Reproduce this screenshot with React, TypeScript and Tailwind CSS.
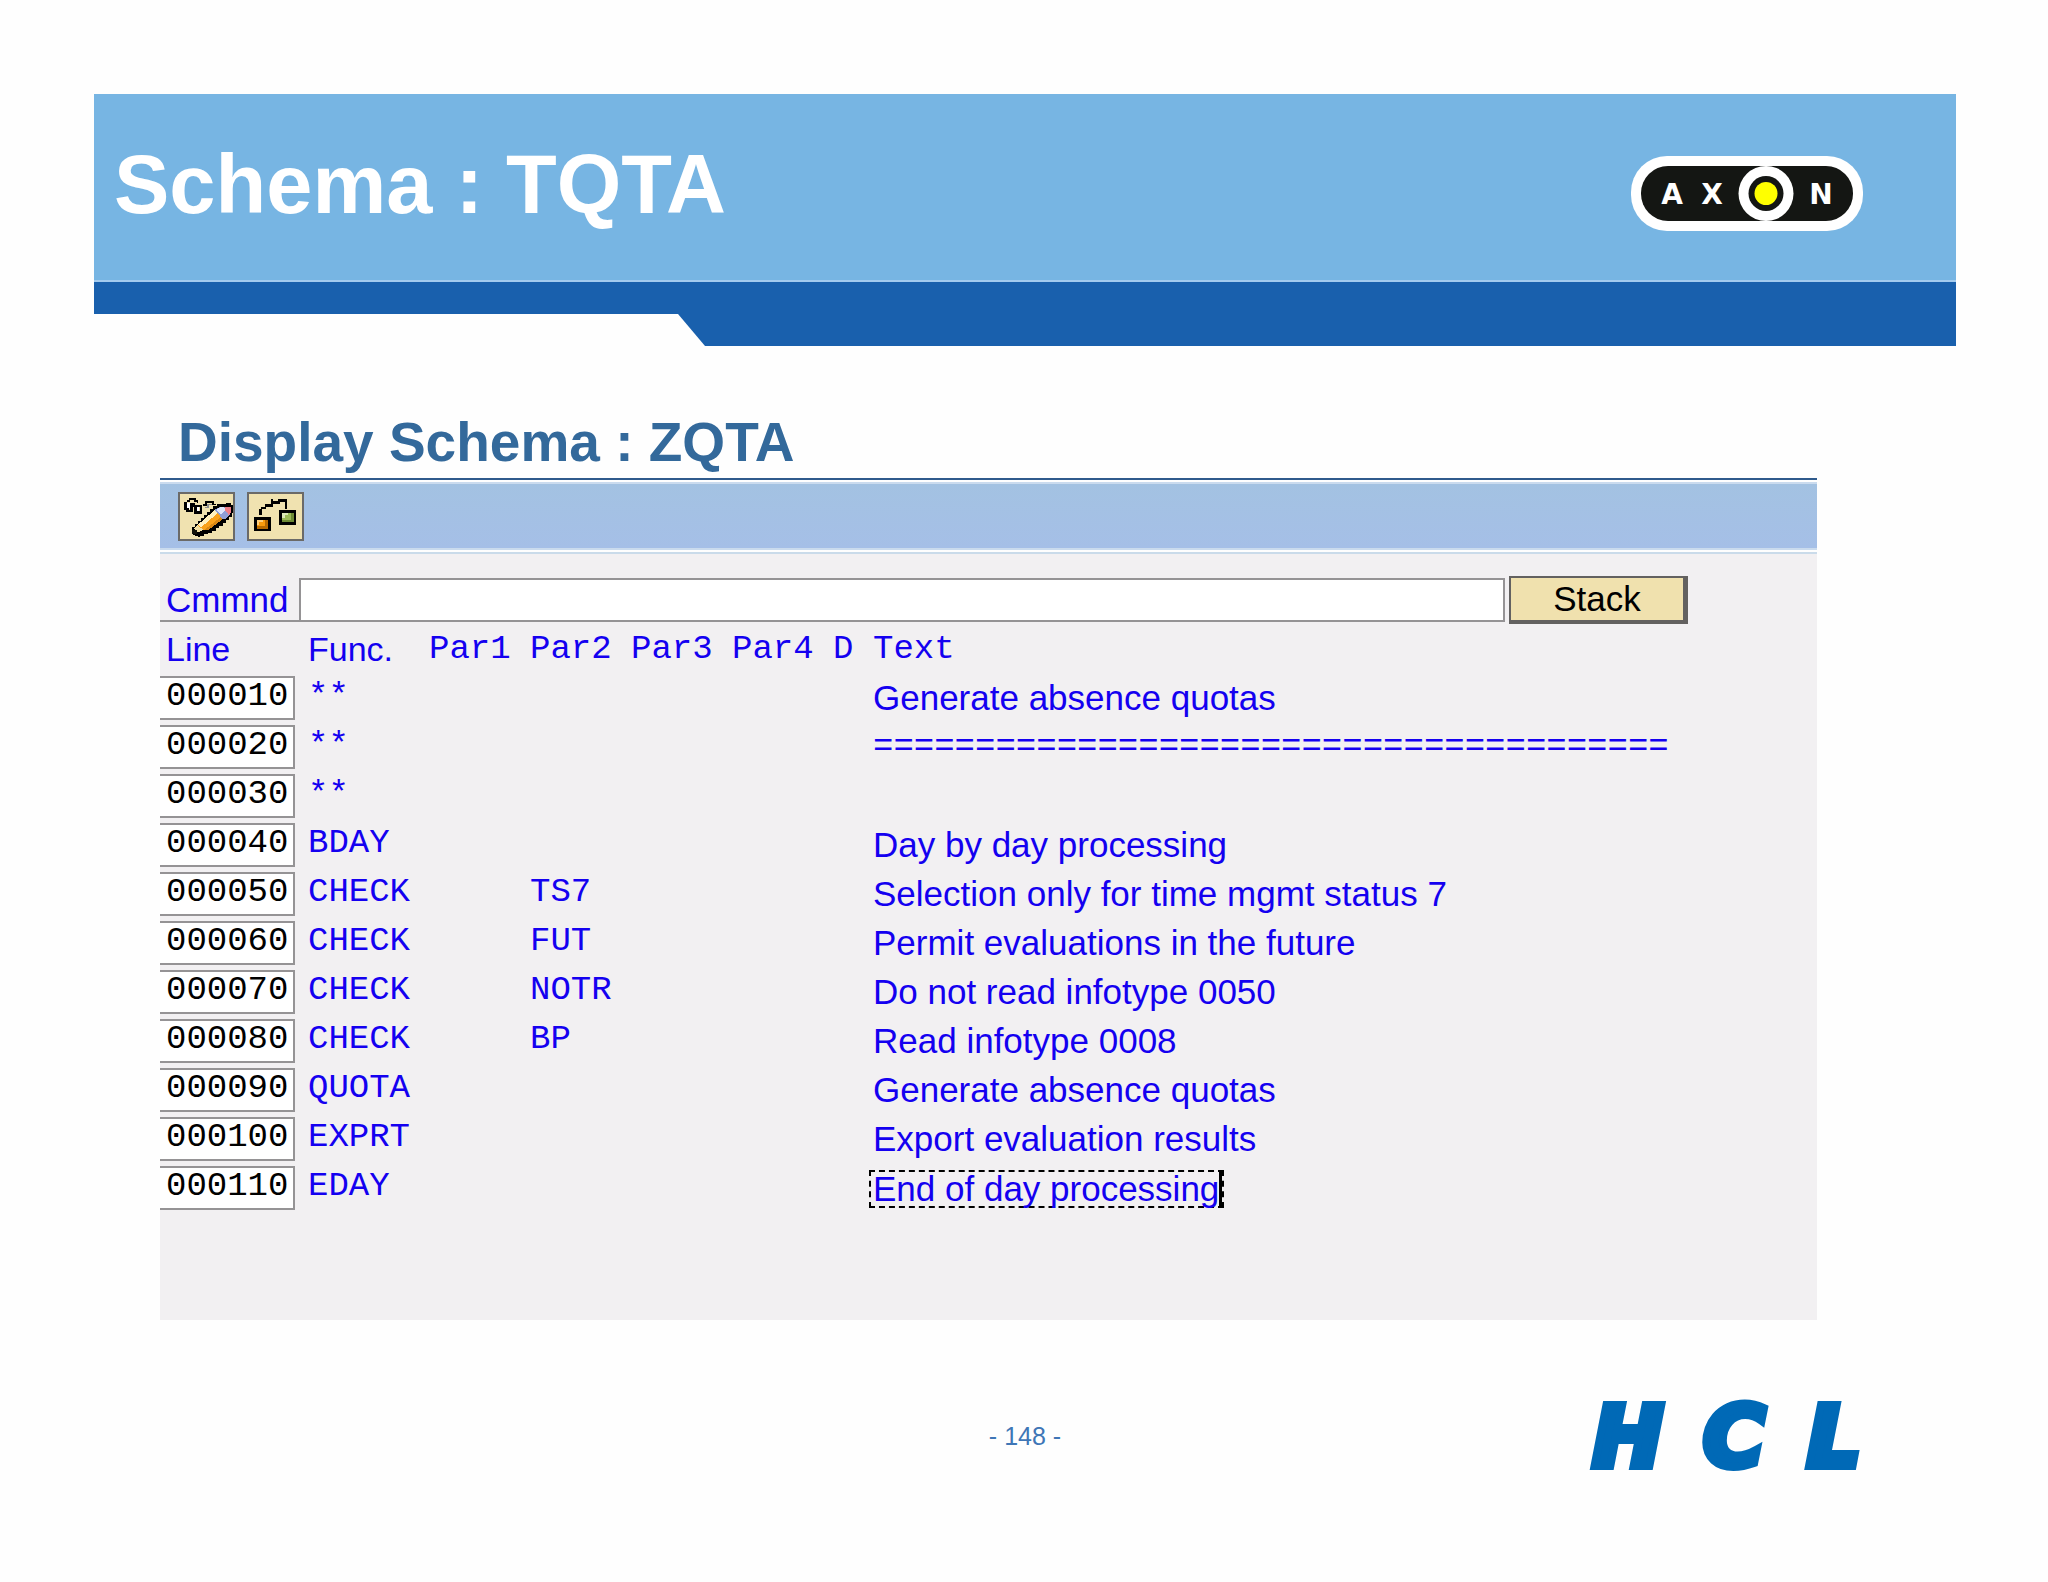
import { useState } from 'react';

interface SchemaLine {
  line: string;
  func: string;
  par2?: string;
  text?: string;
}

const SCHEMA_LINES: SchemaLine[] = [
  { line: '000010', func: '**', text: 'Generate absence quotas' },
  { line: '000020', func: '**', text: '=======================================' },
  { line: '000030', func: '**' },
  { line: '000040', func: 'BDAY', text: 'Day by day processing' },
  { line: '000050', func: 'CHECK', par2: 'TS7', text: 'Selection only for time mgmt status 7' },
  { line: '000060', func: 'CHECK', par2: 'FUT', text: 'Permit evaluations in the future' },
  { line: '000070', func: 'CHECK', par2: 'NOTR', text: 'Do not read infotype 0050' },
  { line: '000080', func: 'CHECK', par2: 'BP', text: 'Read infotype 0008' },
  { line: '000090', func: 'QUOTA', text: 'Generate absence quotas' },
  { line: '000100', func: 'EXPRT', text: 'Export evaluation results' },
  { line: '000110', func: 'EDAY', text: 'End of day processing' },
];

const FOCUSED_LINE = '000110';

function AxonLogo() {
  return (
    <svg width="232" height="75" viewBox="0 0 232 75" role="img" aria-label="Axon">
      <rect width="232" height="75" rx="36" fill="#fff" />
      <rect x="10" y="10" width="212" height="55" rx="27" fill="#141613" />
      <circle cx="135" cy="37.5" r="27.5" fill="#fff" />
      <circle cx="135" cy="37.5" r="17.5" fill="#141613" />
      <circle cx="135" cy="37.5" r="11.5" fill="#ffff00" />
      <g fill="#fff" fontSize="28" fontWeight="700" textAnchor="middle" className="font-['DejaVu_Sans',sans-serif]">
        <text x="41" y="48">A</text>
        <text x="81" y="48">X</text>
        <text x="190" y="48">N</text>
      </g>
    </svg>
  );
}

function HclLogo() {
  return (
    <svg width="370" height="56" viewBox="0 0 370 56" role="img" aria-label="HCL" className="overflow-visible">
      <g
        fill="#0069b6"
        stroke="#0069b6"
        strokeWidth="8"
        fontSize="84"
        fontWeight="700"
        fontStyle="italic"
        textAnchor="middle"
        className="font-['DejaVu_Sans',sans-serif]"
      >
        <text x="80" y="58">H</text>
        <text x="186" y="58">C</text>
        <text x="286" y="58">L</text>
      </g>
    </svg>
  );
}

// glasses + pencil
function DisplayChangeIcon() {
  return (
    <svg width="53" height="45" viewBox="6 6 159 135" shapeRendering="crispEdges" aria-hidden="true">
      <path d="M27 34h9v18h-9zM54 46h8v14h-8z" fill="#fff" />
      <path d="M26 27h8v-7h17v6h7v8" fill="none" stroke="#000" strokeWidth="5" />
      <path d="M22 30v20h6v6h12v-20h8v6h20v19h-16v-17" fill="none" stroke="#000" strokeWidth="7" />
      <path d="M76 38h8v-9h20v8h9" fill="none" stroke="#000" strokeWidth="5" />
      <path d="M82 46h8v-8h12" fill="none" stroke="#8e8e8e" strokeWidth="4" />
      <path
        d="M42 126v-20h8v-10h9v-9h9v-9h9v-9h10v-9h9v-9h10v-8h12v-6h26v-5h16v6h8v26h-7v10h-9v9h-9v9h-9v9h-10v8h-10v7h-11v7h-12v4h-14v5h-12v4z"
        fill="#000"
      />
      <path d="M58 100l52-46 25 25-42 34h-20z" fill="#f9a11b" />
      <path d="M60 98l50-44 10 9-52 44z" fill="#fff0bd" />
      <path d="M80 113l50-39 6 6-44 33z" fill="#d98713" />
      <path d="M49 109l9-9 18 13-11 6h-8z" fill="#f3dfa2" />
      <path d="M110 54l14-9h18l14 15v8l-16 14h-5z" fill="#8f9ed4" />
      <path d="M115 54l13-9h10l6 8-14 14z" fill="#dfe5fa" />
      <path d="M143 44h15v20l-6 5-11-15z" fill="#ef7e86" />
      <path d="M42 115h15v11h-15z" fill="#14140c" />
    </svg>
  );
}

// two linked nodes
function StructureIcon() {
  return (
    <svg width="53" height="45" viewBox="6 6 159 135" shapeRendering="crispEdges" aria-hidden="true">
      <path d="M40 70v-18M42 47h15M55 40h20M74 44v-22M74 31h24M94 25h26M116 22v28" fill="none" stroke="#000" strokeWidth="7" />
      <path d="M21 75h50v43h-50zM97 55h51v43h-51z" fill="#000" />
      <path d="M29 83h34v28h-34z" fill="#b96b00" />
      <path d="M29 83h26v20h-26z" fill="#f99b0c" />
      <path d="M29 83h18v7h-10v9h-8z" fill="#ffcf7a" />
      <path d="M105 63h35v28h-35z" fill="#6d8a35" />
      <path d="M105 63h27v20h-27z" fill="#9bbb57" />
      <path d="M105 63h19v7h-11v9h-8z" fill="#dbe8b6" />
    </svg>
  );
}

function ToolbarButton({ label, children }: { label: string; children: React.ReactNode }) {
  return (
    <button
      type="button"
      aria-label={label}
      className="flex h-[49px] w-[57px] items-center justify-center border-2 border-[#6b6a68] bg-[#f0e2b0]"
    >
      {children}
    </button>
  );
}

function SchemaTable() {
  return (
    <table className="w-full table-fixed border-collapse text-left font-['Liberation_Mono',monospace] text-[34px] leading-[40px] text-[#1400f0]">
      <colgroup>
        <col className="w-[148px]" />
        <col className="w-[121px]" />
        <col className="w-[101px]" />
        <col className="w-[101px]" />
        <col className="w-[101px]" />
        <col className="w-[101px]" />
        <col className="w-[40px]" />
        <col />
      </colgroup>
      <thead>
        <tr className="h-[49px] [&>th]:p-0 [&>th]:font-normal">
          <th scope="col" className="font-['Liberation_Sans',sans-serif]">
            <span className="pl-1.5">Line</span>
          </th>
          <th scope="col" className="font-['Liberation_Sans',sans-serif]">Func.</th>
          <th scope="col">Par1</th>
          <th scope="col">Par2</th>
          <th scope="col">Par3</th>
          <th scope="col">Par4</th>
          <th scope="col">D</th>
          <th scope="col">Text</th>
        </tr>
      </thead>
      <tbody>
        {SCHEMA_LINES.map((row) => (
          <tr key={row.line} className="h-[49px] whitespace-nowrap [&>td]:p-0">
            <td>
              <input
                aria-label={`Line ${row.line}`}
                defaultValue={row.line}
                className="block h-11 w-[135px] border-2 border-l-0 border-[#959395] bg-white pb-1 pl-1.5 text-black outline-none"
              />
            </td>
            <td className="pb-1!">{row.func}</td>
            <td />
            <td className="pb-1!">{row.par2}</td>
            <td />
            <td />
            <td />
            <td className={row.text?.startsWith('=') ? '' : "font-['Liberation_Sans',sans-serif] text-[35px]"}>
              {row.line === FOCUSED_LINE ? (
                <span className="-ml-1 inline-flex h-[38px] items-center border-2 border-dashed border-black pl-0.5 align-middle">
                  {row.text}
                  <span className="h-[34px] w-[3px] bg-black" />
                </span>
              ) : (
                row.text
              )}
            </td>
          </tr>
        ))}
      </tbody>
    </table>
  );
}

export default function App() {
  const [command, setCommand] = useState('');

  return (
    <div className="min-h-screen bg-[#fefefe] pt-[94px] font-['Liberation_Sans',sans-serif]">
      {/* Banner */}
      <header className="mr-[92px] ml-[94px]">
        <div className="flex h-[188px] items-start justify-between border-b-2 border-[#a3cbef] bg-[#77b5e3] pr-[93px] pl-5">
          <h1 className="pt-[45px] text-[83px] leading-[92px] font-bold text-white">Schema : TQTA</h1>
          <div className="pt-[62px]">
            <AxonLogo />
          </div>
        </div>
        <div className="h-8 bg-[#1960ad]" />
        <div className="flex h-8">
          <div className="w-[584px]" />
          <svg width="28" height="32" viewBox="0 0 28 32" aria-hidden="true">
            <path d="M0 0h28v32H27z" fill="#1960ad" />
          </svg>
          <div className="flex-1 bg-[#1960ad]" />
        </div>
      </header>

      {/* Schema window */}
      <main className="mt-[60px] mr-[231px] ml-[160px]">
        <h2 className="h-[72px] pl-[18px] text-[55px] leading-[72px] font-bold text-[#33699b]">
          Display Schema : ZQTA
        </h2>
        <div className="border-t-2 border-[#2f5a8c] pt-0.5">
          <div className="flex h-[68px] items-center gap-3 border-y-2 border-[#cadbee] bg-linear-to-b from-[#a3c2e2] to-[#a5bfe7] pl-[18px]">
            <ToolbarButton label="Display / Change">
              <DisplayChangeIcon />
            </ToolbarButton>
            <ToolbarButton label="Structure">
              <StructureIcon />
            </ToolbarButton>
          </div>
        </div>
        <div className="mt-0.5 border-t-2 border-[#cadbea] bg-[#f2f0f2] pt-[22px] pb-[108px]">
          <form className="flex h-12 items-center text-[35px] leading-[40px]" onSubmit={(e) => e.preventDefault()}>
            <label
              htmlFor="command"
              className="flex h-11 w-[139px] items-center border-b-2 border-[#959395] pt-0.5 pl-1.5 text-[#1400f0]"
            >
              Cmmnd
            </label>
            <input
              id="command"
              value={command}
              onChange={(e) => setCommand(e.target.value)}
              className="h-11 min-w-0 flex-1 border-2 border-[#959395] bg-white px-1 outline-none"
            />
            <button
              type="button"
              className="mr-[129px] ml-1 h-12 w-[179px] border-2 border-r-[5px] border-b-4 border-[#636160] bg-[#f0e1ae] text-black"
            >
              Stack
            </button>
          </form>
          <SchemaTable />
        </div>
      </main>

      {/* Footer */}
      <footer className="mt-[88px] grid grid-cols-[1fr_auto_1fr] items-center pr-[130px] pl-[132px]">
        <span />
        <p className="text-[25px] leading-8 text-[#3f76b6]">- 148 -</p>
        <div className="flex justify-end">
          <HclLogo />
        </div>
      </footer>
    </div>
  );
}
